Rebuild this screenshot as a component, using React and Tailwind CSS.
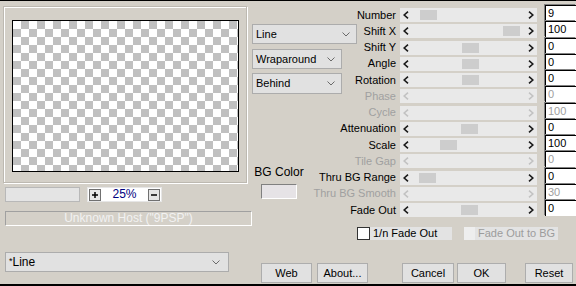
import React from 'react';

const sliders = [
  { label: 'Number', value: '9', thumb: 20 },
  { label: 'Shift X', value: '100', thumb: 103 },
  { label: 'Shift Y', value: '0', thumb: 62 },
  { label: 'Angle', value: '0', thumb: 62 },
  { label: 'Rotation', value: '0', thumb: 62 },
  { label: 'Phase', value: '0', disabled: true },
  { label: 'Cycle', value: '100', disabled: true },
  { label: 'Attenuation', value: '0', thumb: 61 },
  { label: 'Scale', value: '100', thumb: 40 },
  { label: 'Tile Gap', value: '0', disabled: true },
  { label: 'Thru BG Range', value: '0', thumb: 19 },
  { label: 'Thru BG Smooth', value: '30', disabled: true },
  { label: 'Fade Out', value: '0', thumb: 61 },
];

const Chevron = () => (
  <svg width="8" height="5" viewBox="0 0 8 5" className="shrink-0">
    <path d="M0.5 0.5L4 4L7.5 0.5" fill="none" stroke="#6a6a6a" strokeWidth="1" />
  </svg>
);

const Arrow = ({ dir, disabled }) => (
  <svg width="6" height="8" viewBox="0 0 6 8" className="shrink-0">
    <path
      d={dir === 'left' ? 'M5 0.7L1.2 4L5 7.3' : 'M1 0.7L4.8 4L1 7.3'}
      fill="none"
      stroke={disabled ? '#c2c2c2' : '#1a1a1a'}
      strokeWidth="1.6"
    />
  </svg>
);

const Combo = ({ label, className }) => (
  <div className={`flex items-center justify-between pl-[3px] pr-[6px] bg-[#e1e1e1] border border-[#acacac] ${className}`}>
    <span>{label}</span>
    <Chevron />
  </div>
);

const Button = ({ label, className }) => (
  <div className={`h-[20px] flex items-center justify-center bg-[#e1e1e1] border border-[#adadad] ${className}`}>
    {label}
  </div>
);

const SliderRow = ({ label, value, thumb, disabled }) => (
  <div className="flex items-center h-[16.25px]">
    <div className={`w-[39px] flex justify-end whitespace-nowrap ${disabled ? 'text-[#a0a0a0]' : 'text-black'}`}>
      <span>{label}</span>
    </div>
    <div className="relative ml-[4px] w-[137px] h-[14px] bg-[#e9e9e9] flex items-center justify-between px-[3px]">
      <Arrow dir="left" disabled={disabled} />
      {!disabled && (
        <div className="absolute top-[2px] h-[10px] w-[17px] bg-[#cdcdcd]" style={{ left: thumb }} />
      )}
      <Arrow dir="right" disabled={disabled} />
    </div>
    <div
      className={`ml-[8px] w-[31px] h-[16px] -translate-y-[2px] bg-white border-l border-t border-black shadow-[-1px_-1px_0_#808080] pl-[2px] leading-[15px] ${
        disabled ? 'text-[#a0a0a0]' : 'text-black'
      }`}
    >
      {value}
    </div>
  </div>
);

export default function App() {
  return (
    <div className="w-[576px] h-[286px] bg-[#d4d0c8] border-t border-b-2 border-black flex overflow-hidden text-[11px] leading-[13px] text-black font-['Liberation_Sans',Arial,sans-serif]">
      {/* left: preview */}
      <div className="w-[252px] shrink-0 flex flex-col pl-[3px] pt-[5px]">
        <div className="w-[244px] h-[177px] border border-[#bdb9b1] shadow-[1px_1px_0_#ffffff,inset_1px_1px_0_#ffffff] pl-[8px] pt-[13px]">
          <div className="w-[227px] h-[152px] border border-black bg-[conic-gradient(#c0c0c0_25%,#ffffff_0_50%,#c0c0c0_0_75%,#ffffff_0)] bg-[length:16px_16px]" />
        </div>

        <div className="flex mt-[4px] pl-[2px]">
          <div className="w-[75px] h-[15px] bg-[#e4e4e4] border border-[#b8b8b8]" />
          <div className="ml-[7px] w-[75px] h-[15px] bg-white border border-[#e6e6e6] flex items-center px-[1px]">
            <div className="w-[12px] h-[12px] bg-[#e6e6e6] border border-[#707070] flex items-center justify-center">
              <svg width="6" height="6" viewBox="0 0 6 6">
                <path d="M3 0V6M0 3H6" stroke="#000" strokeWidth="1.5" />
              </svg>
            </div>
            <div className="flex-1 text-center text-[#000080] text-[12px]">25%</div>
            <div className="w-[12px] h-[12px] bg-[#e6e6e6] border border-[#707070] flex items-center justify-center">
              <svg width="6" height="6" viewBox="0 0 6 6">
                <path d="M0 3H6" stroke="#000" strokeWidth="1.5" />
              </svg>
            </div>
          </div>
        </div>

        <div className="mt-[9px] ml-[2px] w-[247px] h-[15px] border border-t-[#a0a0a0] border-l-[#a0a0a0] border-r-white border-b-white flex items-center justify-center text-[12px] text-[#f2f2f2]">
          Unknown Host ("9PSP")
        </div>

        <Combo label={<span><sup className="text-[9px] -top-[2px]">*</sup>Line</span>} className="mt-[26px] ml-[2px] w-[224px] h-[20px] text-[12px] pr-[8px]" />
      </div>

      {/* right area */}
      <div className="flex-1 flex flex-col">
        <div className="flex">
          {/* middle column */}
          <div className="w-[105px] shrink-0 flex flex-col">
            <Combo label="Line" className="mt-[23px] w-[105px] h-[20px]" />
            <Combo label="Wraparound" className="mt-[5px] w-[90px] h-[20px]" />
            <Combo label="Behind" className="mt-[4px] w-[90px] h-[21px]" />
            <div className="mt-[72px] ml-[9px] w-[36px] flex flex-col items-center">
              <span className="whitespace-nowrap text-[12px]">BG Color</span>
              <div className="mt-[5px] w-[36px] h-[15px] bg-[#e6e3e6] border border-t-[#808080] border-l-[#808080] border-r-white border-b-white" />
            </div>
          </div>

          {/* sliders */}
          <div className="flex-1 flex flex-col pt-[6px]">
            {sliders.map((s) => (
              <SliderRow key={s.label} {...s} />
            ))}
          </div>
        </div>

        <div className="flex mt-[9px] ml-[105px] h-[13px] whitespace-nowrap">
          <div className="w-[13px] h-[13px] bg-white border border-[#333333]" />
          <div className="w-[82px] h-[13px] bg-[#e3e3e3] pl-[3px] flex items-center">1/n Fade Out</div>
          <div className="ml-[12px] w-[11px] h-[13px] bg-[#eeeeee]" />
          <div className="w-[83px] h-[13px] bg-[#e3e3e3] pl-[3px] flex items-center text-[#9c9c9c]">Fade Out to BG</div>
        </div>

        <div className="flex mt-[23px]">
          <Button label="Web" className="ml-[9px] w-[51px]" />
          <Button label="About..." className="ml-[5px] w-[51px]" />
          <Button label="Cancel" className="ml-[34px] w-[52px]" />
          <Button label="OK" className="ml-[3px] w-[49px]" />
          <Button label="Reset" className="ml-[19px] w-[48px]" />
        </div>
      </div>
    </div>
  );
}
